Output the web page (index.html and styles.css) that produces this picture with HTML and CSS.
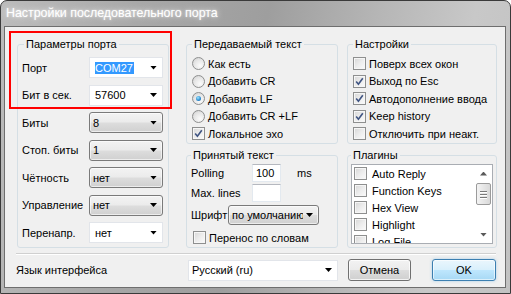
FILE: index.html
```html
<!DOCTYPE html>
<html lang="ru">
<head>
<meta charset="utf-8">
<title>Настройки последовательного порта</title>
<link rel="stylesheet" href="styles.css">
</head>
<body>
<div class="window">
  <div class="titlebar"><span class="title">Настройки последовательного порта</span></div>
  <div class="client">
    <div class="main">
      <fieldset class="group port">
        <legend>Параметры порта</legend>
        <div class="grid">
          <span class="lbl">Порт</span>
          <div class="combo white"><span class="val"><span class="sel">COM27</span></span><i class="arrow"></i></div>
          <span class="lbl">Бит в сек.</span>
          <div class="combo white"><span class="val">57600</span><i class="arrow"></i></div>
          <span class="lbl">Биты</span>
          <div class="combo gray"><span class="val">8</span><i class="arrow"></i></div>
          <span class="lbl">Стоп. биты</span>
          <div class="combo gray"><span class="val">1</span><i class="arrow"></i></div>
          <span class="lbl">Чётность</span>
          <div class="combo gray"><span class="val">нет</span><i class="arrow"></i></div>
          <span class="lbl">Управление</span>
          <div class="combo gray"><span class="val">нет</span><i class="arrow"></i></div>
          <span class="lbl">Перенапр.</span>
          <div class="combo white"><span class="val">нет</span><i class="arrow"></i></div>
        </div>
      </fieldset>

      <div class="col">
        <fieldset class="group sent">
          <legend>Передаваемый текст</legend>
          <div class="opt"><i class="radio"></i><span>Как есть</span></div>
          <div class="opt"><i class="radio"></i><span>Добавить CR</span></div>
          <div class="opt"><i class="radio on"></i><span>Добавить LF</span></div>
          <div class="opt"><i class="radio"></i><span>Добавить CR +LF</span></div>
          <div class="opt"><i class="check"><svg viewBox="0 0 11 11" width="11" height="11"><path d="M2.2 5.6 L4.4 8.3 L8.8 2.2" fill="none" stroke="#3f5482" stroke-width="1.6"/></svg></i><span>Локальное эхо</span></div>
        </fieldset>
        <fieldset class="group recv">
          <legend>Принятый текст</legend>
          <div class="frow"><span class="flbl">Polling</span><span class="edit">100</span><span class="unit">ms</span></div>
          <div class="frow r2"><span class="flbl">Max. lines</span><span class="edit"></span></div>
          <div class="frow r3"><span class="flbl2">Шрифт</span><div class="combo gray fcombo"><span class="val">по умолчанию</span><i class="arrow"></i></div></div>
          <div class="opt wrap"><i class="check"></i><span>Перенос по словам</span></div>
        </fieldset>
      </div>

      <div class="col">
        <fieldset class="group settings">
          <legend>Настройки</legend>
          <div class="opt"><i class="check"></i><span>Поверх всех окон</span></div>
          <div class="opt"><i class="check"><svg viewBox="0 0 11 11" width="11" height="11"><path d="M2.2 5.6 L4.4 8.3 L8.8 2.2" fill="none" stroke="#3f5482" stroke-width="1.6"/></svg></i><span>Выход по Esc</span></div>
          <div class="opt"><i class="check"><svg viewBox="0 0 11 11" width="11" height="11"><path d="M2.2 5.6 L4.4 8.3 L8.8 2.2" fill="none" stroke="#3f5482" stroke-width="1.6"/></svg></i><span>Автодополнение ввода</span></div>
          <div class="opt"><i class="check"><svg viewBox="0 0 11 11" width="11" height="11"><path d="M2.2 5.6 L4.4 8.3 L8.8 2.2" fill="none" stroke="#3f5482" stroke-width="1.6"/></svg></i><span>Keep history</span></div>
          <div class="opt"><i class="check"></i><span>Отключить при неакт.</span></div>
        </fieldset>
        <fieldset class="group plugins">
          <legend>Плагины</legend>
          <div class="listbox">
            <div class="items">
              <div class="litem"><i class="check"></i><span>Auto Reply</span></div>
              <div class="litem"><i class="check"></i><span>Function Keys</span></div>
              <div class="litem"><i class="check"></i><span>Hex View</span></div>
              <div class="litem"><i class="check"></i><span>Highlight</span></div>
              <div class="litem"><i class="check"></i><span>Log File</span></div>
            </div>
            <div class="vscroll">
              <div class="sbtn"><i class="up"></i></div>
              <div class="thumb"><i></i><i></i><i></i></div>
              <div class="track"></div>
              <div class="sbtn"><i class="down"></i></div>
            </div>
          </div>
        </fieldset>
      </div>
    </div>

    <div class="sep"></div>

    <div class="bottom">
      <span class="lang">Язык интерфейса</span>
      <div class="combo white lcombo"><span class="val">Русский (ru)</span><i class="arrow"></i></div>
      <button class="btn cancel">Отмена</button>
      <button class="btn ok">OK</button>
    </div>
  </div>
  <div class="mark"></div>
</div>
</body>
</html>
```

FILE: styles.css
```css
* { box-sizing: border-box; margin: 0; padding: 0; }
html, body { width: 511px; height: 294px; overflow: hidden; }
body {
  font-family: "Liberation Sans", Arial, sans-serif;
  font-size: 11px;
  color: #000;
  background: #fff;
}

.window {
  position: relative;
  width: 511px;
  height: 294px;
  border: 1px solid #3a3a3a;
  border-radius: 7px 7px 0 0;
  background: linear-gradient(100deg, #bcbcbc 0%, #a8a8a8 25%, #9e9e9e 48%, #b6b6b6 68%, #c8c8c8 85%, #c2c2c2 100%);
  display: flex;
  flex-direction: column;
  padding: 0 4px 5px 3px;
}

.titlebar {
  flex: none;
  height: 25px;
  line-height: 25px;
  padding-left: 2px;
}
.title {
  color: #fff;
  font-size: 12.4px;
  text-shadow: 0 0 6px rgba(255, 255, 255, 0.85), 0 0 2px rgba(255, 255, 255, 0.6);
}

.client {
  flex: 1;
  background: #f0f0f0;
  border: 1px solid #6e6e6e;
  display: flex;
  flex-direction: column;
}

.main {
  display: flex;
  align-items: stretch;
  padding: 10px 0 0 12px;
}

fieldset.group {
  border: 1px solid #d5dfe5;
  border-radius: 3px;
  min-width: 0;
}
fieldset.group legend {
  padding: 0 2px;
  line-height: 14px;
  height: 14px;
}

/* left group */
.port {
  width: 152px;
  height: 211px;
  padding: 6px 4px 4px 4px;
}
.port legend { margin-left: 2px; }
.grid {
  display: grid;
  grid-template-columns: 67px 74px;
  grid-auto-rows: 21px;
  row-gap: 6.5px;
  align-items: center;
}

.combo {
  height: 21px;
  display: flex;
  align-items: center;
  overflow: hidden;
  white-space: nowrap;
}
.combo .val { flex: 1; overflow: hidden; }
.combo .arrow {
  flex: none;
  width: 7px;
  height: 4px;
  margin: 0 5px 0 3px;
  background: #000;
  clip-path: polygon(0 0, 100% 0, 50% 100%);
}
.white {
  background: #fff;
  border: 1px solid #e2e5ea;
  padding-left: 5px;
}
.gray {
  border: 1px solid #7a7a7a;
  border-radius: 3px;
  padding-left: 3px;
  background: linear-gradient(#f3f3f3 0%, #ebebeb 48%, #dddddd 52%, #d0d0d0 100%);
  box-shadow: inset 0 0 0 1px rgba(255, 255, 255, 0.6);
}
.sel {
  background: #3399ff;
  color: #fff;
  margin-left: -1px;
  padding: 2px 1px;
}

/* middle column */
.col {
  display: flex;
  flex-direction: column;
  gap: 4px;
  margin-left: 17px;
}
.col + .col { margin-left: 9px; }
.col fieldset.group legend { margin-left: 0; }

.sent, .settings {
  height: 107px;
  padding: 4px 4px 0 5px;
}
.sent { width: 152px; }
.settings { width: 150px; }

.opt {
  display: flex;
  align-items: center;
  gap: 3px;
  height: 17.5px;
  white-space: nowrap;
}

.radio {
  flex: none;
  width: 13px;
  height: 13px;
  border-radius: 50%;
  border: 1px solid #8e8f8f;
  background: radial-gradient(circle at 65% 70%, #fbfbfb 0%, #e6e6e6 55%, #cdcdcd 100%);
  display: flex;
  align-items: center;
  justify-content: center;
}
.radio.on::after {
  content: "";
  width: 5px;
  height: 5px;
  border-radius: 50%;
  background: radial-gradient(circle at 40% 35%, #9be6ff 0%, #2c8ad0 60%, #0f4f86 100%);
}

.check {
  flex: none;
  width: 13px;
  height: 13px;
  border: 1px solid #8e8f8f;
  background: linear-gradient(135deg, #d6d6d6 0%, #ececec 50%, #fbfbfb 100%);
  box-shadow: inset 0 0 0 1px #f6f6f6;
  display: flex;
  align-items: center;
  justify-content: center;
}

.recv {
  width: 152px;
  flex: 1;
  padding: 2px 4px 0 4px;
}
.frow {
  display: flex;
  align-items: center;
  height: 18px;
}
.frow.r2 { margin-top: 2px; }
.frow.r3 { margin-top: 3px; height: 20px; }
.flbl { width: 61px; }
.flbl2 { width: 37px; }
.edit {
  width: 29px;
  height: 18px;
  background: #fff;
  border: 1px solid #e3e9ef;
  border-top-color: #b5b8bf;
  padding-left: 3px;
  line-height: 16px;
}
.unit { margin-left: 16px; }
.fcombo { width: 91px; height: 20px; }
.opt.wrap { margin-top: 4px; padding-left: 2px; }

/* right column */
.plugins {
  width: 150px;
  flex: 1;
  padding: 2px 2px 0 3px;
}
.listbox {
  width: 142px;
  height: 80px;
  background: #fff;
  border: 1px solid #a9adb3;
  display: flex;
  overflow: hidden;
}
.items { flex: 1; padding-left: 2px; }
.litem {
  display: flex;
  align-items: center;
  gap: 5px;
  height: 17px;
  white-space: nowrap;
}
.vscroll {
  flex: none;
  width: 17px;
  display: flex;
  flex-direction: column;
  align-items: center;
  background: #fff;
}
.sbtn {
  height: 17px;
  width: 17px;
  display: flex;
  align-items: center;
  justify-content: center;
}
.sbtn i {
  width: 7px;
  height: 4px;
  background: #5a5a5a;
}
.sbtn .up { clip-path: polygon(50% 0, 100% 100%, 0 100%); }
.sbtn .down { clip-path: polygon(0 0, 100% 0, 50% 100%); }
.thumb {
  margin-top: 1px;
  width: 15px;
  height: 22px;
  border: 1px solid #9b9b9b;
  border-radius: 2px;
  background: linear-gradient(to right, #f3f3f3, #e6e6e6 50%, #d9d9d9);
  display: flex;
  flex-direction: column;
  align-items: center;
  justify-content: center;
  gap: 2px;
}
.thumb i {
  width: 7px;
  height: 1px;
  background: #7a7a7a;
  box-shadow: 0 1px 0 #fff;
}
.track { flex: 1; }

/* bottom */
.sep {
  margin: 5px 9px 0 11px;
  border-top: 1px solid #d0d0d0;
  border-bottom: 1px solid #ffffff;
}
.bottom {
  display: flex;
  align-items: center;
  height: 22px;
  margin-top: 4px;
  padding-left: 11px;
}
.lang { width: 172px; }
.lcombo { width: 150px; padding-left: 3px; }
.btn {
  font: inherit;
  font-size: 11px;
  height: 22px;
  color: #000;
  border-radius: 3px;
  border: 1px solid #707070;
  background: linear-gradient(#f2f2f2 0%, #ebebeb 48%, #dddddd 52%, #cfcfcf 100%);
  box-shadow: inset 0 0 0 1px rgba(255, 255, 255, 0.75);
}
.cancel { width: 63px; margin-left: 10px; }
.ok {
  width: 64px;
  margin-left: 21px;
  border-color: #3c7fb1;
  background: linear-gradient(#eaf6fd 0%, #d9f0fc 48%, #bee6fd 52%, #a7d9f5 100%);
  box-shadow: inset 0 0 0 1px rgba(255, 255, 255, 0.6), 0 0 3px rgba(100, 180, 230, 0.5);
}

/* red annotation frame over the first two rows */
.mark {
  position: absolute;
  left: 8px;
  top: 30px;
  width: 163px;
  height: 78px;
  border: 2px solid #ff0000;
  pointer-events: none;
}
```
